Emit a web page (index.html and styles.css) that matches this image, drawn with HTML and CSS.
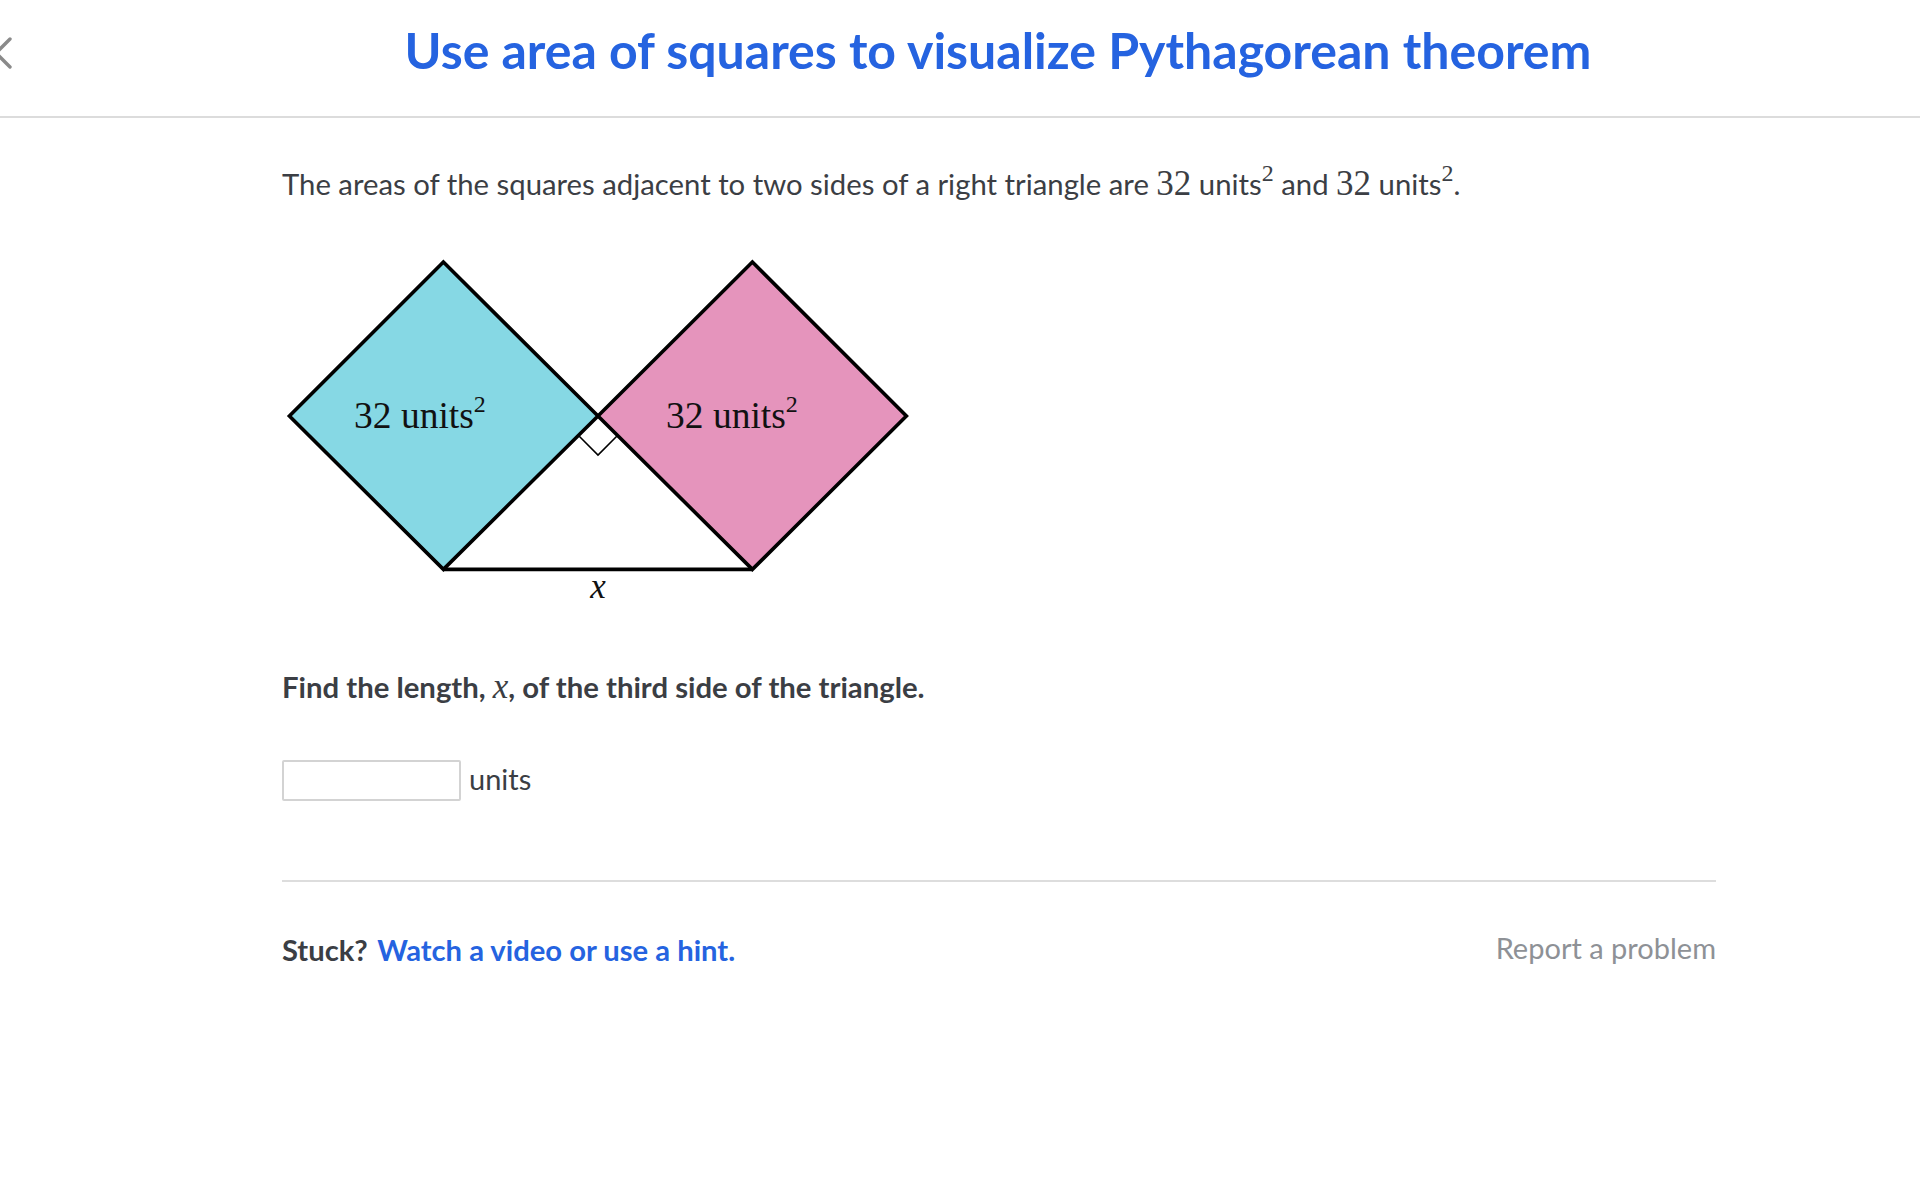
FILE: index.html
```html
<!DOCTYPE html>
<html lang="en">
<head>
<meta charset="utf-8">
<title>Use area of squares to visualize Pythagorean theorem</title>
<link rel="stylesheet" href="styles.css">
</head>
<body>
<header class="topbar">
  <svg class="close-icon" width="34" height="34" viewBox="0 0 34 34" aria-label="Close">
    <path d="M3 3 L31 31 M31 3 L3 31" stroke="#8a8a8a" stroke-width="3.4" stroke-linecap="round" fill="none"/>
  </svg>
  <h1 class="title">Use area of squares to visualize Pythagorean theorem</h1>
</header>
<main class="content">
  <p class="intro">The areas of the squares adjacent to two sides of a right triangle are <span class="math">32</span> units<sup class="sup">2</sup> and <span class="math">32</span> units<sup class="sup">2</sup>.</p>
  <svg class="diagram" width="640" height="360" viewBox="0 0 640 360">
    <polygon points="7.4,166 161.4,12 316,166 161.4,319.4" fill="#86d8e4" stroke="#000" stroke-width="3.6" stroke-linejoin="miter"/>
    <polygon points="316,166 470.4,12 624.4,166 470.4,319.4" fill="#e594bc" stroke="#000" stroke-width="3.6" stroke-linejoin="miter"/>
    <line x1="161.4" y1="319.4" x2="470.4" y2="319.4" stroke="#000" stroke-width="3.6"/>
    <polyline points="296.5,185.5 316,205 335.5,185.5" fill="none" stroke="#000" stroke-width="1.6"/>
    <text class="label" x="72" y="178">32 units<tspan class="label-sup" dy="-16">2</tspan></text>
    <text class="label" x="384" y="178">32 units<tspan class="label-sup" dy="-16">2</tspan></text>
    <text class="label-x" x="316" y="348" text-anchor="middle">x</text>
  </svg>
  <p class="question">Find the length, <span class="math-it">x</span>, of the third side of the triangle.</p>
  <div class="answer-row">
    <input class="answer-input" type="text" aria-label="Answer">
    <span class="unit">units</span>
  </div>
  <hr class="divider">
  <div class="footer">
    <p class="stuck"><strong class="stuck-label">Stuck?</strong> <a class="hint-link" href="#">Watch a video or use a hint.</a></p>
    <a class="report" href="#">Report a problem</a>
  </div>
</main>
</body>
</html>
```
FILE: styles.css
```css
* { box-sizing: border-box; }

html, body {
  margin: 0;
  padding: 0;
  background: #ffffff;
}

body {
  font-family: "Lato", "Open Sans", sans-serif;
  color: #21242c;
  width: 1920px;
  height: 1200px;
  overflow: hidden;
}

.topbar {
  position: relative;
  height: 118px;
  border-bottom: 2px solid #dcdcdc;
  display: flex;
  align-items: flex-start;
  justify-content: center;
  padding-left: 76px;
  padding-top: 25px;
}

.close-icon {
  position: absolute;
  left: -21px;
  top: 36px;
}

.title {
  margin: 0;
  font-size: 50px;
  font-weight: 700;
  color: #2563e0;
  line-height: 1;
}

.content {
  padding-left: 282px;
  width: 1716px;
}

.intro {
  margin: 45px 0 0 0;
  font-size: 29.3px;
  line-height: 41px;
  color: #3b3e44;
}

.math {
  font-family: "Liberation Serif", "Times New Roman", serif;
  font-size: 35px;
  line-height: 1;
}

.sup {
  font-family: "Liberation Serif", "Times New Roman", serif;
  font-size: 24px;
  line-height: 0;
  vertical-align: 0.6em;
}

.diagram {
  display: block;
  margin-top: 46px;
  overflow: visible;
}

.label {
  font-family: "Liberation Serif", "Times New Roman", serif;
  font-size: 37.5px;
  fill: #111;
}

.label-sup {
  font-size: 24px;
}

.label-x {
  font-family: "Liberation Serif", "Times New Roman", serif;
  font-style: italic;
  font-size: 35px;
  fill: #111;
}

.question {
  margin: 56px 0 0 0;
  font-size: 29.3px;
  line-height: 41px;
  font-weight: 700;
  color: #3b3e44;
}

.math-it {
  font-family: "Liberation Serif", "Times New Roman", serif;
  font-style: italic;
  font-weight: 400;
  font-size: 35px;
  line-height: 1;
}

.answer-row {
  margin-top: 53px;
  display: flex;
  align-items: center;
  gap: 8px;
}

.answer-input {
  width: 179px;
  height: 41px;
  border: 2px solid #d3d3d3;
  border-radius: 2px;
  background: #fff;
  margin: 0;
  padding: 0 8px;
  font-family: inherit;
  font-size: 26px;
}

.unit {
  font-size: 29px;
  line-height: 1;
  color: #3b3e44;
  padding-bottom: 5px;
}

.divider {
  margin: 79px 0 0 0;
  border: 0;
  border-top: 2px solid #dddddd;
  width: 1434px;
  height: 0;
}

.footer {
  width: 1434px;
  margin-top: 47px;
  display: flex;
  justify-content: space-between;
  align-items: baseline;
}

.stuck {
  margin: 0;
  font-size: 29.2px;
  line-height: 41px;
}

.stuck-label {
  color: #3b3e44;
  font-weight: 700;
}

.hint-link {
  color: #2563e0;
  font-weight: 700;
  text-decoration: none;
  margin-left: 2px;
}

.report {
  color: #8e9196;
  font-size: 29px;
  text-decoration: none;
  position: relative;
  top: -2px;
}
```
